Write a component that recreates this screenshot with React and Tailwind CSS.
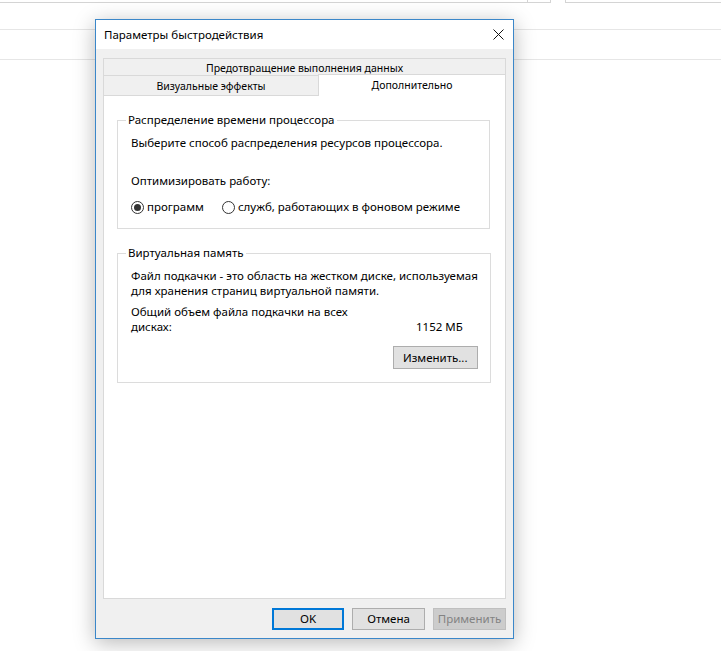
import React from "react";

function Radio({ checked, children, className = "" }) {
  return (
    <label className={"flex items-center " + className}>
      <span className="flex h-[13px] w-[13px] items-center justify-center rounded-full border border-[#333333] bg-white">
        {checked && <span className="h-[7px] w-[7px] rounded-full bg-[#333333]" />}
      </span>
      <span className="ml-[3px]">{children}</span>
    </label>
  );
}

export default function App() {
  return (
    <div
      className="relative h-[651px] w-[721px] overflow-hidden whitespace-nowrap bg-white text-[11.5px] leading-[16px] text-black"
      style={{ fontFamily: '"Noto Sans", "Liberation Sans", sans-serif' }}
    >
      {/* background page */}
      <div className="flex h-[3px]">
        <div className="w-[527px] border-b border-[#d4d4d4]" />
        <div className="w-[24px] border-x border-b border-[#d4d4d4]" />
        <div className="w-[14px]" />
        <div className="flex-1 border-l border-b border-[#d4d4d4]" />
      </div>
      <div className="mt-[26px] border-t border-[#e6e6e6]" />
      <div className="mt-[29px] border-t border-[#e6e6e6]" />

      {/* dialog window */}
      <div className="absolute left-[95px] top-[19px] flex h-[620px] w-[419px] flex-col border border-[#3b87c9] bg-[#f0f0f0] shadow-[0_4px_20px_rgba(0,0,0,0.28)]">
        <div className="flex h-[30px] items-center justify-between bg-white pl-[8px] pr-[9px]">
          <span>Параметры быстродействия</span>
          <svg width="11" height="11" viewBox="0 0 11 11" fill="none" stroke="#111" strokeWidth="1">
            <path d="M0.5 0.5 L10.5 10.5 M10.5 0.5 L0.5 10.5" />
          </svg>
        </div>

        <div className="flex flex-1 flex-col px-[7px] pb-[8px] pt-[9px]">
          {/* tabs */}
          <div className="flex h-[18px] items-center justify-center border border-[#d9d9d9] bg-[#f0f0f0] pt-[2px] text-[10.5px]">
            Предотвращение выполнения данных
          </div>
          <div className="flex h-[19px] items-end text-[10.5px]">
            <div className="flex h-[19px] w-[215px] items-center justify-center border-l border-[#d9d9d9] bg-[#f0f0f0] pt-[1px]">
              Визуальные эффекты
            </div>
            <div className="relative z-10 -mb-px flex h-[22px] flex-1 items-center justify-center border-x border-t border-[#d9d9d9] bg-white pb-[1px]">
              Дополнительно
            </div>
          </div>

          {/* panel */}
          <div className="flex h-[504px] flex-col border border-[#d9d9d9] bg-white pl-[13px] pr-[15px] pt-[16px]">
            <fieldset className="border border-[#dcdcdc] pb-[13px] pl-[13px] pr-[10px]">
              <legend className="ml-[-5px] px-[2px]">Распределение времени процессора</legend>
              <div className="mt-[7px]">Выберите способ распределения ресурсов процессора.</div>
              <div className="mt-[22px]">Оптимизировать работу:</div>
              <div className="mt-[10px] flex">
                <Radio checked>программ</Radio>
                <Radio className="ml-[18px]">служб, работающих в фоновом режиме</Radio>
              </div>
            </fieldset>

            <fieldset className="mt-[16px] border border-[#dcdcdc] pb-[13px] pl-[13px] pr-[12px]">
              <legend className="ml-[-5px] px-[2px]">Виртуальная память</legend>
              <div className="mt-[7px] leading-[15px]">
                <div>Файл подкачки - это область на жестком диске, используемая</div>
                <div>для хранения страниц виртуальной памяти.</div>
              </div>
              <div className="mt-[6px] leading-[15px]">
                <div>Общий объем файла подкачки на всех</div>
                <div className="flex justify-between">
                  <span>дисках:</span>
                  <span className="mr-[15px]">1152 МБ</span>
                </div>
              </div>
              <div className="mt-[12px] flex justify-end">
                <button className="flex h-[23px] w-[85px] items-center justify-center border border-[#adadad] bg-[#e1e1e1]">
                  Изменить...
                </button>
              </div>
            </fieldset>
          </div>

          {/* buttons */}
          <div className="mt-[9px] flex justify-end gap-[8px]">
            <button className="flex h-[22px] w-[72px] items-center justify-center border-2 border-[#0078d7] bg-[#e1e1e1]">
              OK
            </button>
            <button className="flex h-[22px] w-[73px] items-center justify-center border border-[#adadad] bg-[#e1e1e1]">
              Отмена
            </button>
            <button className="flex h-[22px] w-[73px] items-center justify-center border border-[#bfbfbf] bg-[#cccccc] text-[#838383]">
              Применить
            </button>
          </div>
        </div>
      </div>
    </div>
  );
}
